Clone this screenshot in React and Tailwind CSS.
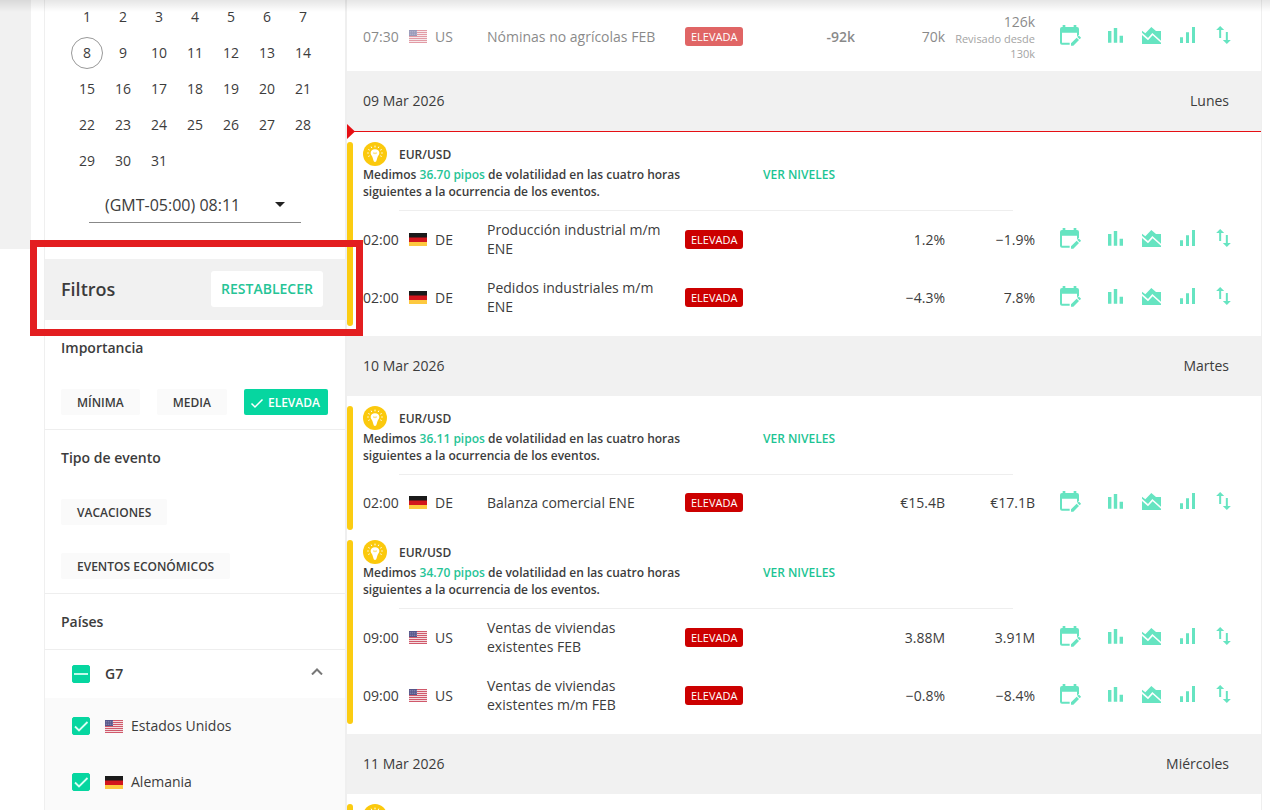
import React, { useState } from "react";

const paises = [
  { code: "US", nombre: "Estados Unidos" },
  { code: "DE", nombre: "Alemania" },
];

const dias = [
  {
    fecha: "09 Mar 2026",
    dia: "Lunes",
    ahora: true,
    grupos: [
      {
        par: "EUR/USD",
        pipos: "36.70",
        eventos: [
          { hora: "02:00", pais: "DE", nombre: "Producción industrial m/m ENE", prevision: "1.2%", anterior: "−1.9%" },
          { hora: "02:00", pais: "DE", nombre: "Pedidos industriales m/m ENE", prevision: "−4.3%", anterior: "7.8%" },
        ],
      },
    ],
  },
  {
    fecha: "10 Mar 2026",
    dia: "Martes",
    grupos: [
      {
        par: "EUR/USD",
        pipos: "36.11",
        eventos: [
          { hora: "02:00", pais: "DE", nombre: "Balanza comercial ENE", prevision: "€15.4B", anterior: "€17.1B" },
        ],
      },
      {
        par: "EUR/USD",
        pipos: "34.70",
        eventos: [
          { hora: "09:00", pais: "US", nombre: "Ventas de viviendas existentes FEB", prevision: "3.88M", anterior: "3.91M" },
          { hora: "09:00", pais: "US", nombre: "Ventas de viviendas existentes m/m FEB", prevision: "−0.8%", anterior: "−8.4%" },
        ],
      },
    ],
  },
  {
    fecha: "11 Mar 2026",
    dia: "Miércoles",
    grupos: [{ eventos: [] }],
  },
];

const pasado = {
  hora: "07:30",
  pais: "US",
  nombre: "Nóminas no agrícolas FEB",
  actual: "-92k",
  prevision: "70k",
  anterior: "126k",
  revisado: "130k",
};

const Bandera = ({ code }) => {
  if (code === "DE") {
    return (
      <svg className="w-[18px] h-[13px] shrink-0" viewBox="0 0 18 13" aria-hidden="true">
        <path fill="#1a1a1a" d="M0 0h18v5H0z" />
        <path fill="#d3161d" d="M0 4.500h18v4.500H0z" />
        <path fill="#fdc93f" d="M0 9h18v4H0z" />
      </svg>
    );
  }
  return (
    <svg className="w-[18px] h-[13px] shrink-0" viewBox="0 0 18 13" aria-hidden="true">
      <path fill="#f3dcdf" d="M0 0h18v13H0z" />
      <path stroke="#d0596b" d="M0 .5h18M0 2.500h18M0 4.500h18M0 6.500h18M0 8.500h18M0 10.500h18M0 12.500h18" />
      <path fill="#55568a" d="M0 0h8v6H0z" />
      <path stroke="#a9abca" strokeWidth=".8" strokeDasharray=".8 1.200" d="M.8 1.500h7M.8 3h7M.8 4.500h7" />
    </svg>
  );
};

const Bombilla = () => (
  <svg className="w-6 h-6" viewBox="0 0 72 72" aria-hidden="true">
    <circle cx="36" cy="36" r="36" fill="#fbc90d" />
    <path
      fill="#fff"
      d="M36 22c-8 0-13 5-13 11 0 5 3 7 5 11l3 10c1 4 2 6 5 6s4-2 5-6l3-10c2-4 5-6 5-11 0-6-5-11-13-11z"
    />
    <path fill="none" stroke="#fbc90d" strokeWidth="2" d="M30 32l4 3 2-3 2 3 4-3" />
    <path
      stroke="#fff"
      strokeWidth="3"
      strokeLinecap="round"
      d="M36 12v3M25 15l1 2M47 15l-1 2M17 23l2 1M55 23l-2 1M14 33h2M58 33h-2M17 43l2-1M55 43l-2-1"
    />
  </svg>
);

const iconos = [
  {
    titulo: "Añadir al calendario",
    clase: "w-[21px] h-[21px]",
    caja: "0 0 63 63",
    d: "M0 12a6 6 0 0 1 6-6h2V0h8v6h25V0h8v6h2a6 6 0 0 1 6 6v17l-6 6V23H6v30h23v6H6a6 6 0 0 1-6-6zM33 55l17-17 7 7-17 17h-7zM52 36l3-3q1.500-1.500 3 0l4 4q1.500 1.500 0 3l-3 3z",
  },
  {
    titulo: "Histórico",
    clase: "w-[15px] h-[15px]",
    caja: "0 0 44 44",
    d: "M0 9h10v34H0zM17 0h10v43H17zM34 23h10v20H34z",
  },
  {
    titulo: "Volatilidad",
    clase: "w-[19px] h-[17px]",
    caja: "0 0 57 51",
    d: "M0 11l10 8L28 0l14 12h15v29L31 18 18 33 0 17zM0 24l18 16 14-15 25 22v4H0z",
  },
  {
    titulo: "Impacto",
    clase: "w-[15px] h-4",
    caja: "0 0 45 48",
    d: "M0 31h9v17H0zM18 16h9v32h-9zM36 0h9v48h-9z",
  },
  {
    titulo: "Variación",
    clase: "w-[15px] h-[18px]",
    caja: "0 0 44 54",
    d: "M12 0l12 12h-9v24H9V12H0zM29 18h6v24h9L32 54 20 42h9z",
  },
];

const Acciones = () => (
  <div className="flex items-center justify-end pb-0.5 pr-5">
    {iconos.map((icono, i) => (
      <button
        key={icono.titulo}
        aria-label={icono.titulo}
        className={`w-9 h-9 flex items-center justify-center text-[#66e4c1] ${i === 0 ? "mr-[9px]" : ""}`}
      >
        <svg className={icono.clase} viewBox={icono.caja} fill="currentColor">
          <path d={icono.d} />
        </svg>
      </button>
    ))}
  </div>
);

const TablaEventos = ({ eventos, atenuado }) => {
  const celda = atenuado ? "opacity-60" : "";
  return (
    <table className="w-full table-fixed text-sm leading-[19px]">
      <colgroup>
        <col className="w-[46px]" />
        <col className="w-[26px]" />
        <col className="w-[52px]" />
        <col />
        <col className="w-20" />
        <col className="w-[90px]" />
        <col className="w-[90px]" />
        <col className="w-[90px]" />
        <col className="w-[226px]" />
      </colgroup>
      <tbody>
        {eventos.map((e) => (
          <tr key={e.nombre} className="h-14">
            <td className={celda}>{e.hora}</td>
            <td className={celda}>
              <Bandera code={e.pais} />
            </td>
            <td className={celda}>{e.pais}</td>
            <td className={`py-[10px] pr-5 ${celda}`}>{e.nombre}</td>
            <td className={celda}>
              <span className="inline-block rounded-[3px] bg-[#cc0000] px-[6px] text-[11px] font-medium text-white">
                ELEVADA
              </span>
            </td>
            <td className={`text-right font-semibold ${celda}`}>{e.actual}</td>
            <td className={`text-right ${celda}`}>{e.prevision}</td>
            <td className={`text-right whitespace-nowrap ${celda}`}>
              {e.anterior}
              {e.revisado && (
                <span className="block text-[11px] leading-[15px] text-[#666666]">
                  Revisado desde
                  <br />
                  {e.revisado}
                </span>
              )}
            </td>
            <td>
              <Acciones />
            </td>
          </tr>
        ))}
      </tbody>
    </table>
  );
};

const Grupo = ({ grupo }) => (
  <div className="flex pt-[10px]">
    <div className="w-[6px] shrink-0 rounded-full bg-[#fbcc12]" />
    <div className="flex-1 min-w-0 pl-[10px]">
      <div className="flex h-[68px] text-xs leading-[17px] font-semibold text-[#3c3c3c]">
        <div className="w-[400px]">
          <div className="flex h-6 items-center gap-3">
            <Bombilla />
            {grupo.par && <span>{grupo.par}</span>}
          </div>
          {grupo.pipos && (
            <p>
              Medimos <span className="text-[#26c496]">{grupo.pipos} pipos</span> de volatilidad en las cuatro horas
              <br />
              siguientes a la ocurrencia de los eventos.
            </p>
          )}
        </div>
        {grupo.pipos && (
          <a href="#niveles" className="pt-6 text-[#1cc493]">
            VER NIVELES
          </a>
        )}
      </div>
      <div className="-mb-px ml-9 mr-[248px] border-b border-[#eeeeee]" />
      <TablaEventos eventos={grupo.eventos} />
    </div>
  </div>
);

const Chip = ({ children, activo, onClick }) => (
  <button
    onClick={onClick}
    aria-pressed={activo}
    className={`flex h-[26px] items-center rounded-[2px] pt-0.5 text-xs font-semibold ${
      activo ? "bg-[#06d6a0] pl-[6px] pr-2 text-white" : "bg-[#fafafa] px-4 text-[#3c3c3c]"
    }`}
  >
    {activo && (
      <svg className="mr-1 h-[14px] w-[14px]" viewBox="0 0 14 14" fill="none" stroke="currentColor" strokeWidth="1.500">
        <path d="M1.500 7.500l3.500 3.500 7.500-7.500" />
      </svg>
    )}
    {children}
  </button>
);

const Casilla = ({ id, parcial, marcado, onChange }) => (
  <span className="grid h-[18px] w-[18px] place-items-center">
    <input
      id={id}
      type="checkbox"
      checked={marcado}
      onChange={onChange}
      className="col-start-1 row-start-1 h-[18px] w-[18px] appearance-none rounded-[2px] border border-[#06d6a0] checked:bg-[#06d6a0]"
    />
    <svg
      className="pointer-events-none col-start-1 row-start-1 h-[18px] w-[18px]"
      viewBox="0 0 18 18"
      fill="none"
      stroke="#d9fff4"
      strokeWidth="1.800"
    >
      <path d={parcial ? "M2 9h14" : "M3 9.500l4 4 8.500-8.500"} />
    </svg>
  </span>
);

const Lateral = () => {
  const [importancia, setImportancia] = useState("ELEVADA");
  const [marcados, setMarcados] = useState({ G7: true, US: true, DE: true });

  const alternar = (clave) => setMarcados({ ...marcados, [clave]: !marcados[clave] });

  return (
    <aside className="w-[302px] shrink-0 border-x border-[#efefef]">
      {/* Calendario */}
      <div className="-mt-px grid grid-cols-[repeat(7,36px)] justify-center">
        {Array.from({ length: 31 }, (_, i) => i + 1).map((n) => (
          <button key={n} className="flex h-9 w-9 items-center justify-center text-sm">
            <span
              className={`flex h-8 w-8 items-center justify-center rounded-full ${
                n === 8 ? "border border-[#999999]" : ""
              }`}
            >
              {n}
            </span>
          </button>
        ))}
      </div>
      <div className="ml-11 mt-2 flex h-9 w-[212px] items-center border-b border-[#888888] px-4">
        <select aria-label="Zona horaria" className="flex-1 appearance-none bg-transparent text-base">
          <option>(GMT-05:00) 08:11</option>
        </select>
        <svg className="h-[5px] w-[10px]" viewBox="0 0 10 5" fill="#222222" aria-hidden="true">
          <path d="M0 0h10L5 5z" />
        </svg>
      </div>

      {/* Filtros */}
      <div className="mt-9 flex h-[61px] items-center justify-between bg-[#f1f1f1] pb-0.5 pl-4 pr-[22px]">
        <h2 className="text-lg font-semibold">Filtros</h2>
        <button
          onClick={() => setImportancia("ELEVADA")}
          className="h-9 rounded-[3px] bg-white px-[10px] text-sm font-semibold text-[#26c496]"
        >
          RESTABLECER
        </button>
      </div>

      <section className="border-b border-[#eeeeee] pl-4">
        <h3 className="flex h-[55px] items-center text-sm font-semibold">Importancia</h3>
        <div className="flex gap-[17px] py-[14px]">
          {["MÍNIMA", "MEDIA", "ELEVADA"].map((nivel) => (
            <Chip key={nivel} activo={importancia === nivel} onClick={() => setImportancia(nivel)}>
              {nivel}
            </Chip>
          ))}
        </div>
      </section>

      <section className="border-b border-[#eeeeee] pl-4">
        <h3 className="flex h-[55px] items-center text-sm font-semibold">Tipo de evento</h3>
        <div className="flex flex-col items-start gap-7 py-[14px]">
          <Chip>VACACIONES</Chip>
          <Chip>EVENTOS ECONÓMICOS</Chip>
        </div>
      </section>

      <h3 className="flex h-14 items-center border-b border-[#eeeeee] pl-4 text-sm font-semibold">Países</h3>
      <div className="flex h-12 items-center pl-[27px] pr-[22px]">
        <Casilla id="pais-G7" parcial marcado={marcados.G7} onChange={() => alternar("G7")} />
        <label htmlFor="pais-G7" className="flex-1 pl-[15px] text-sm font-semibold">
          G7
        </label>
        <button aria-label="Contraer G7" className="pb-[6px]">
          <svg className="h-[7px] w-3" viewBox="0 0 12 7" fill="none" stroke="#777777" strokeWidth="2">
            <path d="M1 6.500l5-5 5 5" />
          </svg>
        </button>
      </div>
      {paises.map((p) => (
        <div key={p.code} className="flex h-14 items-center bg-[#fafafa] pl-[27px]">
          <Casilla id={`pais-${p.code}`} marcado={marcados[p.code]} onChange={() => alternar(p.code)} />
          <label htmlFor={`pais-${p.code}`} className="flex items-center gap-2 pl-[15px] text-sm">
            <Bandera code={p.code} />
            {p.nombre}
          </label>
        </div>
      ))}
    </aside>
  );
};

export default function App() {
  return (
    <div className="relative flex h-screen overflow-hidden bg-white pr-2 font-['Open_Sans','Noto_Sans',sans-serif] text-[#3c3c3c]">
      <div className="mr-[13px] h-[249px] w-[31px] shrink-0 bg-[#f1f1f1]" />
      <Lateral />

      <main className="min-w-0 flex-1 border-x border-[#efefef]">
        <div className="flex h-[71px] items-center pl-4 pt-px">
          <TablaEventos eventos={[pasado]} atenuado />
        </div>
        {dias.map((d) => (
          <section key={d.fecha}>
            <div className="flex h-[60px] items-center justify-between bg-[#f1f1f1] pl-4 pr-8 text-sm">
              <h2>{d.fecha}</h2>
              <span>{d.dia}</span>
            </div>
            {d.ahora && (
              <div className="relative border-t border-[#e60f14]">
                <svg className="absolute -top-2 left-0 h-[15px] w-2" viewBox="0 0 8 15" fill="#e60f14">
                  <path d="M0 0l8 7.500L0 15z" />
                </svg>
              </div>
            )}
            <div className="pb-[10px]">
              {d.grupos.map((g, i) => (
                <Grupo key={i} grupo={g} />
              ))}
            </div>
          </section>
        ))}
      </main>

      {/* Sombra de la cabecera fija */}
      <div className="pointer-events-none absolute inset-x-0 top-0 h-3 bg-linear-to-b from-black/10 to-transparent" />

      {/* Recuadro que resalta los filtros */}
      <div className="pointer-events-none absolute left-[30px] top-[240px] h-24 w-[333px] border-[7px] border-[#e31e20]" />
    </div>
  );
}
